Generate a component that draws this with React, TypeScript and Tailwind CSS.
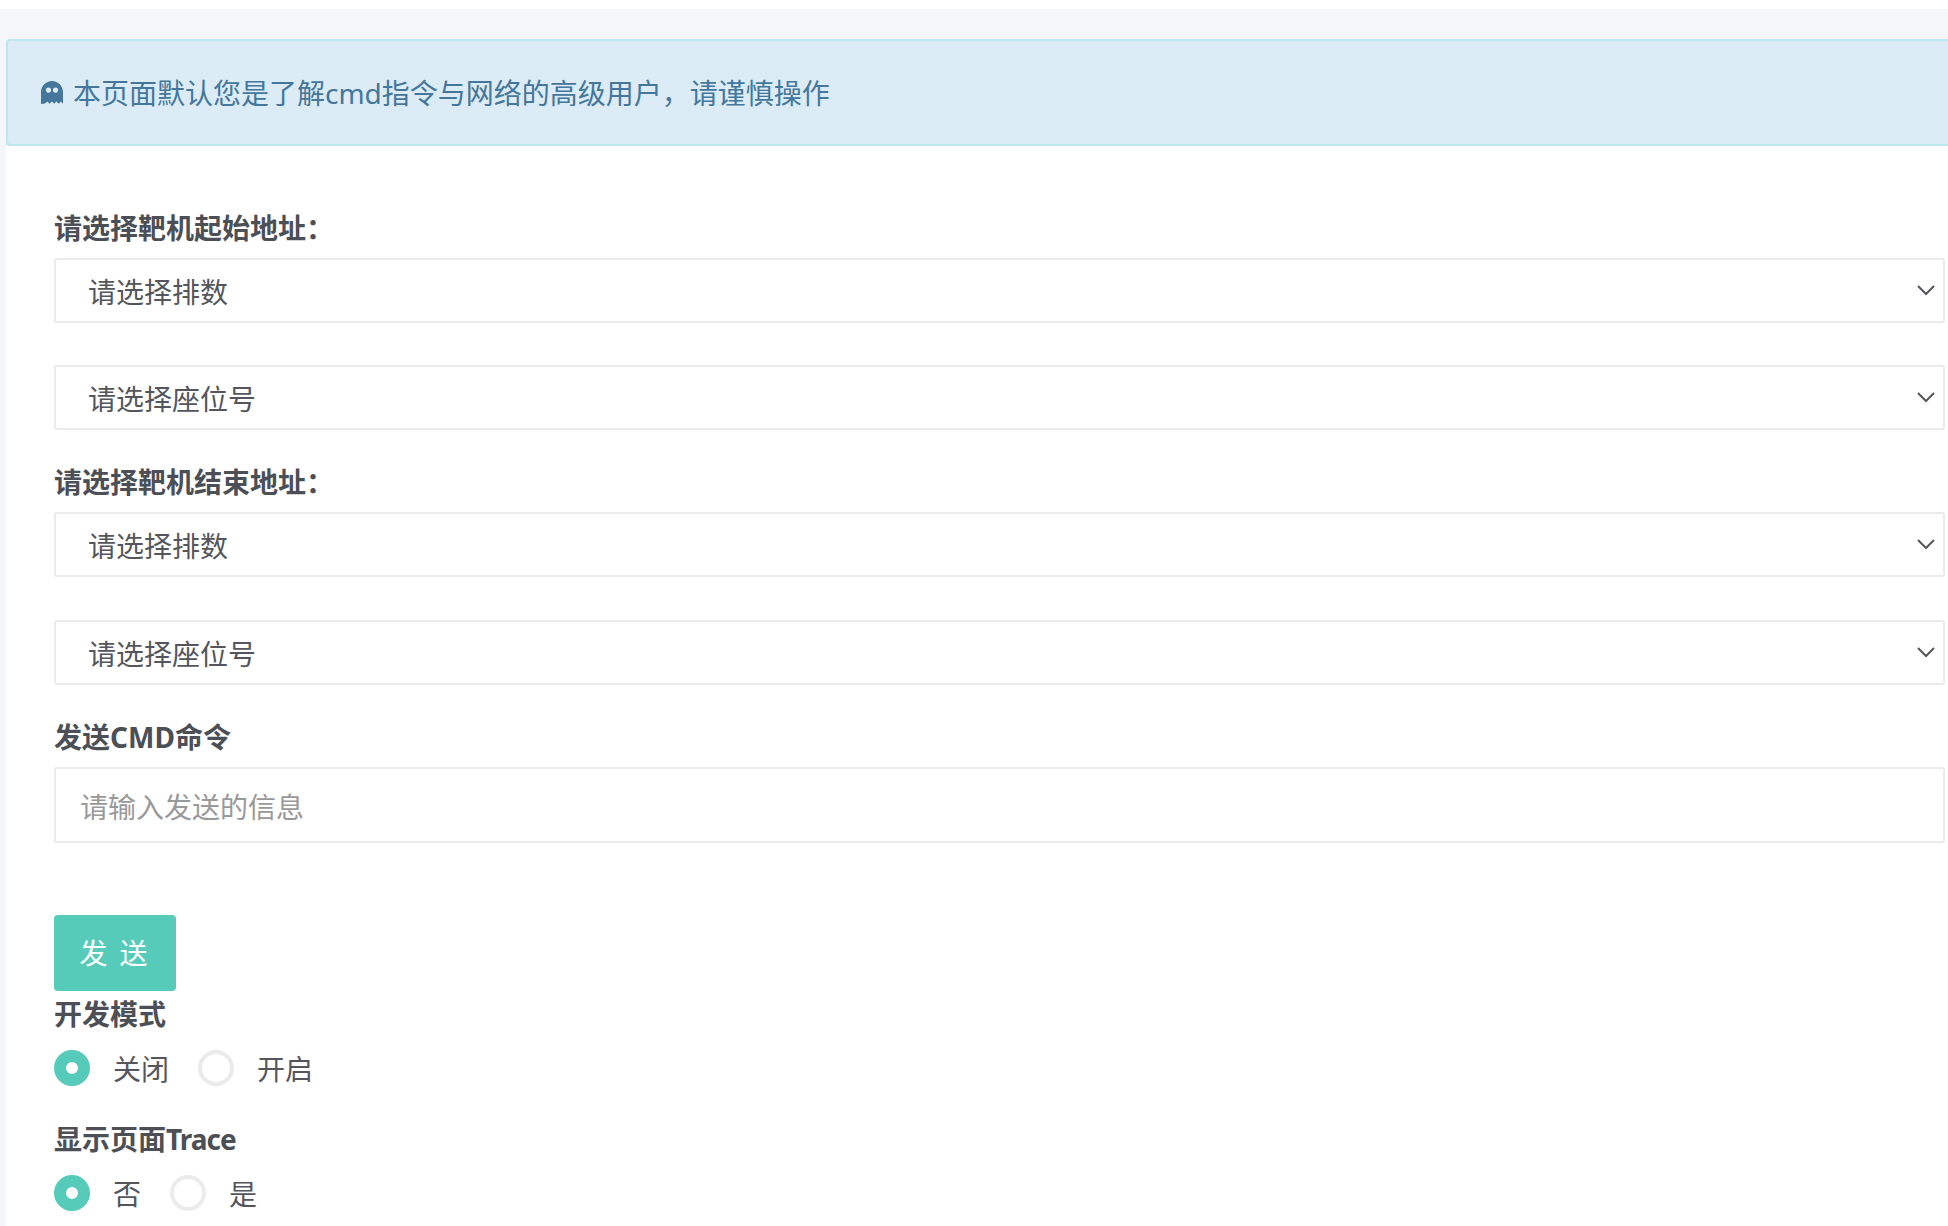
import React from 'react';

const FONT = 'font-["Noto_Sans","Noto_Sans_CJK_SC",sans-serif]';

const Ghost = () => (
  <svg width="22" height="23" viewBox="0 0 22 23" className="mr-[10px] shrink-0" fill="currentColor">
    <path
      fillRule="evenodd"
      d="M0 11C0 5 5 0 11 0s11 5 11 11v12l-2-2.4-2.2 2.2-2.4-2.4-2.3 2.4-2.2-2.4-2.3 2.4-2.4-2.4-2.2 2.2L0 23V11zm7.5-4.5a2.6 2.6 0 1 0 0 5.2 2.6 2.6 0 0 0 0-5.2zm7 0a2.6 2.6 0 1 0 0 5.2 2.6 2.6 0 0 0 0-5.2z"
    />
  </svg>
);

const Chevron = () => (
  <svg width="18" height="11" viewBox="0 0 18 11" fill="none" stroke="currentColor" strokeWidth="2">
    <path d="M1 1l8 8 8-8" />
  </svg>
);

const FieldLabel = ({ children, className }: { children: React.ReactNode; className: string }) => (
  <div className={`text-[28px] leading-[40px] font-bold text-[#4c4f55] ${className}`}>{children}</div>
);

const SelectBox = ({ text, className }: { text: string; className: string }) => (
  <div className={`h-[65px] flex items-center justify-between pl-[32px] pr-[8px] border-2 border-[#ebebeb] rounded-[3px] bg-white text-[28px] text-[#54565c] ${className}`}>
    <span className="pt-[2px]">{text}</span>
    <Chevron />
  </div>
);

const Radio = ({ label, checked }: { label: string; checked?: boolean }) => (
  <div className="flex items-center h-[36px]">
    {checked ? (
      <span className="w-[36px] h-[36px] rounded-full border-[12px] border-[#57cbb9] bg-white" />
    ) : (
      <span className="w-[36px] h-[36px] rounded-full border-[4px] border-[#ebebeb] bg-white" />
    )}
    <span className="ml-[23px] pt-[1px] text-[28px] text-[#54565c]">{label}</span>
  </div>
);

export default function App() {
  return (
    <div className={`h-[1226px] w-full overflow-hidden bg-[#f4f6fa] ${FONT}`}>
      <div className="h-[9px] bg-white" />
      <div className="pt-[30px] pl-[6px]">
        <div className="h-[107px] flex items-center pl-[33px] border-2 border-r-0 border-[#bce8f1] rounded-l-[4px] bg-[#dbecf6] text-[28px] text-[#44779b]">
          <Ghost />
          <span>本页面默认您是了解cmd指令与网络的高级用户，请谨慎操作</span>
        </div>
        <div className="h-[1080px] bg-white pl-[48px] pr-[3px]">
          <FieldLabel className="pt-[62px] mb-[10px] box-content">请选择靶机起始地址：</FieldLabel>
          <SelectBox text="请选择排数" className="mb-[42px]" />
          <SelectBox text="请选择座位号" className="mb-[32px]" />
          <FieldLabel className="mb-[10px]">请选择靶机结束地址：</FieldLabel>
          <SelectBox text="请选择排数" className="mb-[43px]" />
          <SelectBox text="请选择座位号" className="mb-[32px]" />
          <FieldLabel className="mb-[10px]">发送CMD命令</FieldLabel>
          <div className="h-[76px] flex items-center pl-[24px] border-2 border-[#ebebeb] rounded-[3px] bg-white text-[28px] text-[#999999]">
            <span className="pt-[4px]">请输入发送的信息</span>
          </div>
          <button className="block mt-[72px] w-[122px] h-[76px] rounded-[4px] bg-[#57cbb9] text-[28px] text-white tracking-[12px] pl-[9px]">
            发送
          </button>
          <FieldLabel className="mt-[3px] mb-[16px]">开发模式</FieldLabel>
          <div className="flex gap-[29px]">
            <Radio label="关闭" checked />
            <Radio label="开启" />
          </div>
          <FieldLabel className="mt-[33px] mb-[16px]">
            显示页面<span className="tracking-[-1px]">Trace</span>
          </FieldLabel>
          <div className="flex gap-[29px]">
            <Radio label="否" checked />
            <Radio label="是" />
          </div>
        </div>
      </div>
    </div>
  );
}
